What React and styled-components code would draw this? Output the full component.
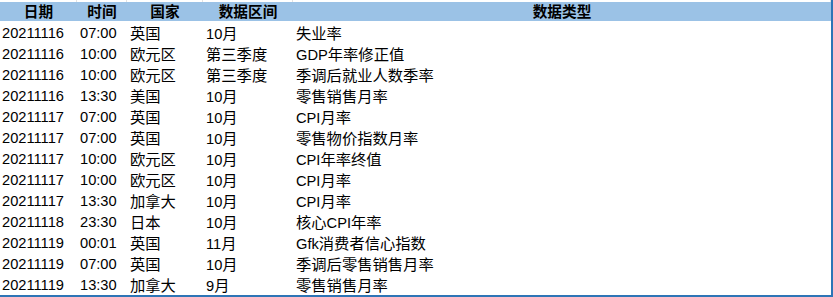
import React from "react";
import styled, { createGlobalStyle } from "styled-components";

const GlobalStyle = createGlobalStyle`
  html, body {
    margin: 0;
    padding: 0;
    background: #ffffff;
  }
  body {
    font-family: "Liberation Sans", "Noto Sans CJK SC", sans-serif;
    color: #000000;
  }
`;

const COLUMNS = "77px 50px 76px 90px 538px";

const Sheet = styled.div`
  width: 833px;
  height: 297px;
  box-sizing: border-box;
  border-right: 2px solid #2e75b6;
  border-bottom: 2px solid #2e75b6;
  overflow: hidden;
`;

const GridStrip = styled.div`
  display: grid;
  grid-template-columns: ${COLUMNS};
  height: 2px;
  span {
    border-right: 1px solid #e2e2e2;
  }
`;

const Row = styled.div`
  display: grid;
  grid-template-columns: ${COLUMNS};
  height: ${(p) => (p.$header ? "19px" : "21px")};
  background: ${(p) => (p.$header ? "#9bc2e6" : "transparent")};
`;

const Cell = styled.div`
  display: flex;
  align-items: center;
  justify-content: ${(p) => (p.$header ? "center" : "flex-start")};
  padding: ${(p) => (p.$header ? "1px 0 0 0" : "4px 0 0 3px")};
  font-size: 14.67px;
  font-weight: ${(p) => (p.$header ? 700 : 400)};
  white-space: nowrap;
  line-height: 1;
  &:first-child {
    padding-left: ${(p) => (p.$header ? "0" : "2px")};
  }
`;

// CJK runs render a touch wider than the Latin digits
const Han = styled.span`
  font-size: 15.3px;
`;

const headers = ["日期", "时间", "国家", "数据区间", "数据类型"];

const rows = [
  ["20211116", "07:00", "英国", "10月", "失业率"],
  ["20211116", "10:00", "欧元区", "第三季度", "GDP年率修正值"],
  ["20211116", "10:00", "欧元区", "第三季度", "季调后就业人数季率"],
  ["20211116", "13:30", "美国", "10月", "零售销售月率"],
  ["20211117", "07:00", "英国", "10月", "CPI月率"],
  ["20211117", "07:00", "英国", "10月", "零售物价指数月率"],
  ["20211117", "10:00", "欧元区", "10月", "CPI年率终值"],
  ["20211117", "10:00", "欧元区", "10月", "CPI月率"],
  ["20211117", "13:30", "加拿大", "10月", "CPI月率"],
  ["20211118", "23:30", "日本", "10月", "核心CPI年率"],
  ["20211119", "00:01", "英国", "11月", "Gfk消费者信心指数"],
  ["20211119", "07:00", "英国", "10月", "季调后零售销售月率"],
  ["20211119", "13:30", "加拿大", "9月", "零售销售月率"],
];

const renderText = (text) =>
  text
    .split(/([\u4e00-\u9fff]+)/)
    .filter(Boolean)
    .map((part, i) =>
      /[\u4e00-\u9fff]/.test(part) ? <Han key={i}>{part}</Han> : part
    );

export default function App() {
  return (
    <>
      <GlobalStyle />
      <Sheet>
        <GridStrip>
          {headers.map((h) => (
            <span key={h} />
          ))}
        </GridStrip>
        <Row $header>
          {headers.map((h) => (
            <Cell key={h} $header>
              {h}
            </Cell>
          ))}
        </Row>
        {rows.map((r, i) => (
          <Row key={i}>
            {r.map((v, j) => (
              <Cell key={j}>
                <span>{renderText(v)}</span>
              </Cell>
            ))}
          </Row>
        ))}
      </Sheet>
    </>
  );
}
